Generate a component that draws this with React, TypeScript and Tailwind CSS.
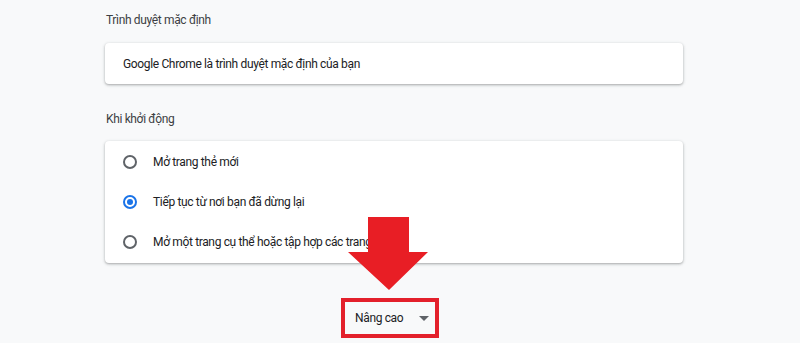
const options = [
  { label: 'Mở trang thẻ mới', checked: false },
  { label: 'Tiếp tục từ nơi bạn đã dừng lại', checked: true },
  { label: 'Mở một trang cụ thể hoặc tập hợp các trang', checked: false },
]

const Radio = ({ checked }: { checked: boolean }) => (
  <span
    className={`flex items-center justify-center w-[14px] h-[14px] rounded-full border-2 ${
      checked ? 'border-[#1a73e8]' : 'border-[#5f6368]'
    }`}
  >
    {checked && <span className="w-[6px] h-[6px] rounded-full bg-[#1a73e8]" />}
  </span>
)

const App = () => {
  return (
    <div
      className="relative w-full h-[343px] overflow-hidden bg-[#f8f9fa] text-[12px] tracking-[-0.35px] text-[#202124]"
      style={{ fontFamily: 'Roboto, "Noto Sans", Arial, sans-serif' }}
    >
      <div className="ml-[105px] w-[578px] pt-[10px]">
        <h2 className="leading-5 pl-[1px] text-[#3c4043]">Trình duyệt mặc định</h2>
        <div className="mt-[13px] h-[41px] flex items-center px-[18px] bg-white rounded-[4px] shadow-[0_1px_2px_rgba(60,64,67,0.3),0_1px_3px_1px_rgba(60,64,67,0.12)]">
          Google Chrome là trình duyệt mặc định của bạn
        </div>

        <h2 className="mt-[25px] leading-5 pl-[1px] text-[#3c4043]">Khi khởi động</h2>
        <div className="mt-[12px] py-[1px] bg-white rounded-[4px] shadow-[0_1px_2px_rgba(60,64,67,0.3),0_1px_3px_1px_rgba(60,64,67,0.12)]">
          {options.map((o) => (
            <div key={o.label} className="flex items-center h-10 pl-[18px] gap-4">
              <Radio checked={o.checked} />
              <span>{o.label}</span>
            </div>
          ))}
        </div>

        <div className="mt-[35px] flex justify-center pr-[8px]">
          <div className="flex items-center w-[98px] h-[40px] border-4 border-[#e3202b] pl-[10px] pr-[6px] bg-[#f8f9fa]">
            <span>Nâng cao</span>
            <svg width="10" height="5" viewBox="0 0 10 5" className="ml-auto">
              <path d="M0 0 L10 0 L5 5 Z" fill="#5f6368" />
            </svg>
          </div>
        </div>
      </div>

      {/* annotation arrow */}
      <svg
        className="absolute left-[348px] top-[217px]"
        width="80"
        height="74"
        viewBox="0 0 80 74"
      >
        <path d="M20 0 H61 V35 H80 L41 73 L0 35 H20 Z" fill="#e81e25" />
      </svg>
    </div>
  )
}

export default App
